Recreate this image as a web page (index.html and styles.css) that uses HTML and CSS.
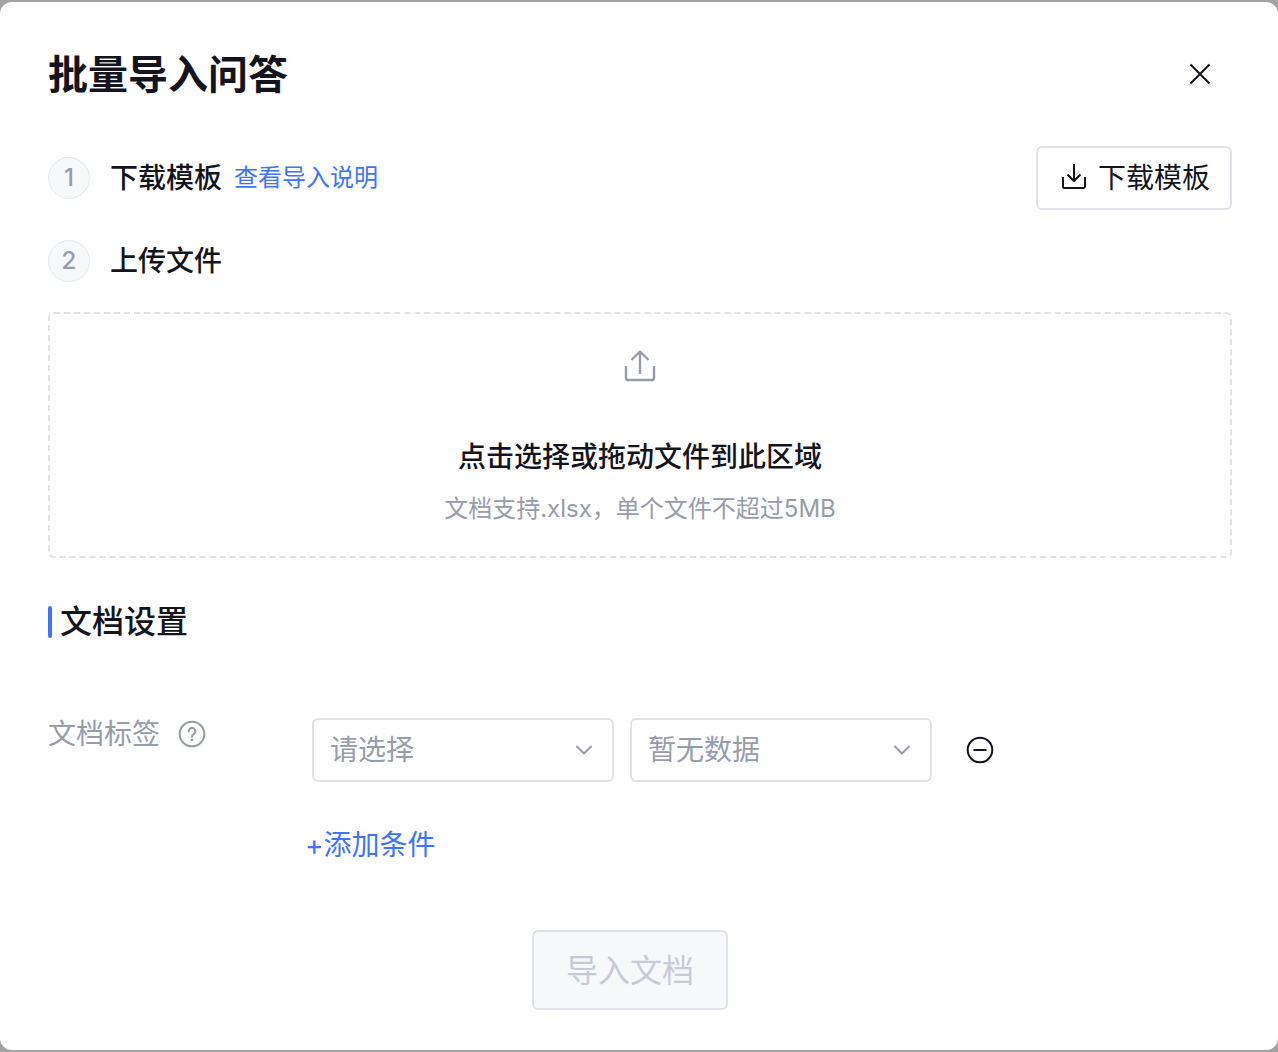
FILE: index.html
```html
<!DOCTYPE html>
<html lang="zh-CN">
<head>
  <meta charset="UTF-8">
  <meta name="viewport" content="width=device-width, initial-scale=1.0">
  <title>批量导入问答</title>
  <link rel="stylesheet" href="styles.css">
</head>
<body>
  <main class="dialog" role="dialog" aria-labelledby="dialog-title">
    <header class="dialog-header">
      <h1 id="dialog-title">批量导入问答</h1>
      <button type="button" class="icon-btn" aria-label="关闭">
        <svg width="24" height="24" viewBox="0 0 24 24" fill="none" stroke="currentColor" stroke-width="2">
          <path d="M2.500 2.500l19 19M21.500 2.500l-19 19"/>
        </svg>
      </button>
    </header>

    <section class="step">
      <span class="step-num">1</span>
      <h2>下载模板</h2>
      <a href="#help" class="help-link">查看导入说明</a>
      <button type="button" class="btn download-btn">
        <svg width="28" height="28" viewBox="0 0 28 28" fill="none" stroke="currentColor" stroke-width="2">
          <path d="M14 0v17M7.500 10.500l6.500 6.500 6.500-6.500"/>
          <path d="M3 13v9.500a1.500 1.500 0 0 0 1.500 1.500h19a1.500 1.500 0 0 0 1.500-1.500V13"/>
        </svg>
        下载模板
      </button>
    </section>

    <section class="step">
      <span class="step-num">2</span>
      <h2>上传文件</h2>
    </section>

    <label class="drop-zone">
      <input type="file" class="file-input" accept=".xlsx">
      <svg width="36" height="36" viewBox="0 0 36 36" fill="none" stroke="currentColor" stroke-width="2.400" stroke-linejoin="round">
        <path d="M18 26V3.500M9.500 12L18 3.500l8.500 8.500"/>
        <path d="M4 18v12a2 2 0 0 0 2 2h24a2 2 0 0 0 2-2V18"/>
      </svg>
      <span class="drop-title">点击选择或拖动文件到此区域</span>
      <span class="drop-hint">文档支持.xlsx，单个文件不超过5MB</span>
    </label>

    <h2 class="section-title">文档设置</h2>

    <div class="form-row">
      <div class="form-label">
        <span>文档标签</span>
        <svg width="28" height="28" viewBox="0 0 28 28" fill="none" stroke="currentColor" stroke-width="2" stroke-linecap="round" stroke-linejoin="round">
          <circle cx="14" cy="14" r="12.300"/>
          <path d="M10.800 11.200a3.300 3.300 0 1 1 5.200 2.700c-1.400 1-2 1.500-2 2.900"/>
          <circle cx="14" cy="20" r="1.300" fill="currentColor" stroke="none"/>
        </svg>
      </div>
      <div class="form-fields">
        <div class="condition">
          <div class="select">
            <select aria-label="文档标签">
              <option>请选择</option>
            </select>
            <svg width="20" height="20" viewBox="0 0 20 20" fill="none" stroke="currentColor" stroke-width="2" stroke-linecap="round" stroke-linejoin="round">
              <path d="M3 6.500l7 7 7-7"/>
            </svg>
          </div>
          <div class="select">
            <select aria-label="标签值">
              <option>暂无数据</option>
            </select>
            <svg width="20" height="20" viewBox="0 0 20 20" fill="none" stroke="currentColor" stroke-width="2" stroke-linecap="round" stroke-linejoin="round">
              <path d="M3 6.500l7 7 7-7"/>
            </svg>
          </div>
          <button type="button" class="icon-btn" aria-label="删除条件">
            <svg width="28" height="28" viewBox="0 0 28 28" fill="none" stroke="currentColor" stroke-width="2">
              <circle cx="14" cy="14" r="12.300"/>
              <path d="M7.500 14h13"/>
            </svg>
          </button>
        </div>
        <button type="button" class="add-btn">+添加条件</button>
      </div>
    </div>

    <footer class="dialog-footer">
      <button type="button" class="btn submit-btn" disabled>导入文档</button>
    </footer>
  </main>
</body>
</html>
```
FILE: styles.css
```css
* {
  box-sizing: border-box;
}
body {
  margin: 0;
  padding: 2px 0;
  background-color: #a3a3a3;
  font-family: Inter, "Noto Sans CJK SC", sans-serif;
  font-size: 28px;
  line-height: 40px;
  color: #14141e;
}
h1, h2 {
  margin: 0;
  font-weight: 500;
}
h1 {
  padding-top: 2px;
  font-size: 40px;
  font-weight: 600;
  line-height: 56px;
}
h2 {
  font-size: 28px;
}
button, select {
  font: inherit;
  color: inherit;
}
button {
  cursor: pointer;
}
svg {
  display: block;
  flex: none;
  overflow: visible;
}
.dialog {
  background-color: #fff;
  border-radius: 12px;
  padding: 43px 46px 40px 48px;
}
.dialog-header {
  display: flex;
  align-items: center;
  justify-content: space-between;
  margin-bottom: 43px;
}
.icon-btn {
  display: flex;
  align-items: center;
  justify-content: center;
  width: 64px;
  height: 56px;
  padding: 0;
  border: 0;
  background: none;
}
.step {
  display: flex;
  align-items: center;
  min-height: 62px;
}
.step + .step {
  margin-top: 20px;
}
.step-num {
  display: flex;
  align-items: center;
  justify-content: center;
  width: 42px;
  height: 42px;
  margin-right: 20px;
  border: 1px solid #e6e7ec;
  border-radius: 50%;
  background-color: #f7f8fa;
  color: #979caa;
  font-size: 24px;
  font-weight: 500;
}
.help-link {
  margin-left: 12px;
  font-size: 24px;
  color: #3e74fc;
  text-decoration: none;
}
.btn {
  display: flex;
  align-items: center;
  justify-content: center;
  border: 2px solid #e1e2e8;
  border-radius: 6px;
  background-color: #fff;
}
.download-btn {
  gap: 10px;
  height: 64px;
  margin-left: auto;
  padding: 0 20px 0 22px;
}
.drop-zone {
  display: flex;
  flex-direction: column;
  align-items: center;
  margin-top: 20px;
  padding: 34px 20px 27px;
  border: 2px dashed #e1e2e8;
  border-radius: 6px;
  color: #979caa;
  cursor: pointer;
}
.file-input {
  position: absolute;
  width: 1px;
  height: 1px;
  opacity: 0;
}
.drop-title {
  margin-top: 53px;
  font-weight: 500;
  color: #14141e;
}
.drop-hint {
  margin-top: 12px;
  font-size: 24px;
}
.section-title {
  display: flex;
  align-items: center;
  gap: 8px;
  margin-top: 44px;
  font-size: 32px;
}
.section-title::before {
  content: "";
  width: 4px;
  height: 32px;
  border-radius: 2px;
  background-color: #3e74fc;
}
.form-row {
  display: flex;
  margin-top: 76px;
}
.form-label {
  display: flex;
  align-items: center;
  flex: none;
  gap: 18px;
  width: 264px;
  height: 32px;
  color: #979caa;
}
.form-fields {
  flex: 1;
}
.condition {
  display: flex;
  align-items: center;
  gap: 16px;
}
.select {
  position: relative;
  width: 302px;
  color: #979caa;
}
.select select {
  width: 100%;
  height: 64px;
  padding: 0 48px 0 16px;
  border: 2px solid #e1e2e8;
  border-radius: 6px;
  background-color: #fff;
  appearance: none;
}
.select svg {
  position: absolute;
  top: 22px;
  right: 20px;
  pointer-events: none;
}
.add-btn {
  display: block;
  margin: 43px 0 0 -7px;
  padding: 0;
  border: 0;
  background: none;
  color: #3e74fc;
}
.dialog-footer {
  display: flex;
  justify-content: center;
  margin-top: 65px;
  padding-right: 20px;
}
.submit-btn {
  height: 80px;
  padding: 2px 32px 0;
  background-color: #f7f8fa;
  color: #c8cad6;
  font-size: 32px;
  cursor: not-allowed;
}
```
